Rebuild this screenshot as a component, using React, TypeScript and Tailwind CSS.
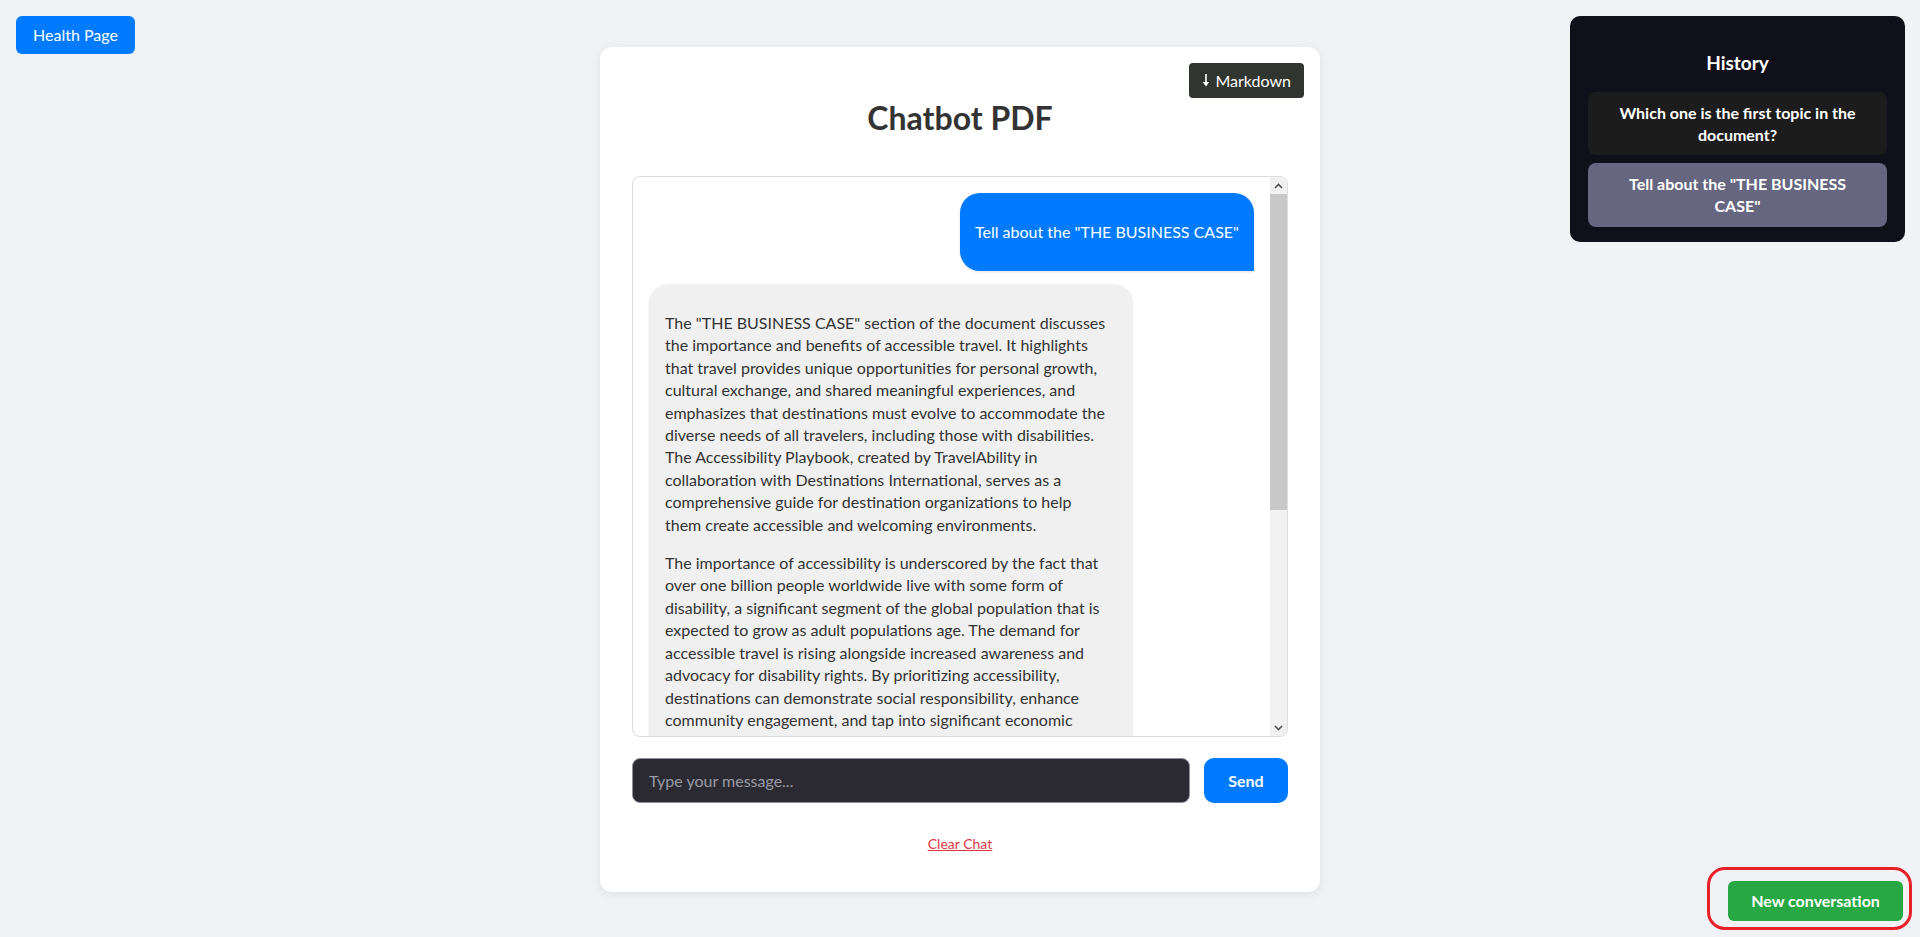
import React from 'react';

const firstParagraph = [
  'The "THE BUSINESS CASE" section of the document discusses',
  'the importance and benefits of accessible travel. It highlights',
  'that travel provides unique opportunities for personal growth,',
  'cultural exchange, and shared meaningful experiences, and',
  'emphasizes that destinations must evolve to accommodate the',
  'diverse needs of all travelers, including those with disabilities.',
  'The Accessibility Playbook, created by TravelAbility in',
  'collaboration with Destinations International, serves as a',
  'comprehensive guide for destination organizations to help',
  'them create accessible and welcoming environments.',
];

const secondParagraph = [
  'The importance of accessibility is underscored by the fact that',
  'over one billion people worldwide live with some form of',
  'disability, a significant segment of the global population that is',
  'expected to grow as adult populations age. The demand for',
  'accessible travel is rising alongside increased awareness and',
  'advocacy for disability rights. By prioritizing accessibility,',
  'destinations can demonstrate social responsibility, enhance',
  'community engagement, and tap into significant economic',
];

function Lines({ lines }: { lines: string[] }) {
  return (
    <p className="my-4 whitespace-nowrap leading-[22.4px]">
      {lines.map((line, i) => (
        <React.Fragment key={i}>
          {line}
          {i < lines.length - 1 && <br />}
        </React.Fragment>
      ))}
    </p>
  );
}

export default function App() {
  return (
    <div className="min-h-screen bg-[#f0f2f5] pt-[47px] font-[family-name:Lato,sans-serif] text-[16px] text-[#333]">
      {/* Top left link */}
      <button className="fixed top-4 left-4 flex h-[38px] w-[119px] items-center justify-center rounded-[6px] bg-[#007bff] text-[16px] text-white">
        Health Page
      </button>

      {/* History panel */}
      <aside className="fixed top-4 right-[15px] w-[335px] rounded-[10px] bg-[#10101a] px-[18px] pt-[36px] pb-[15px] text-white">
        <h3 className="mb-[18px] text-center text-[19px] leading-[22px] font-bold">History</h3>
        <div className="flex flex-col gap-2">
          <div className="rounded-lg bg-[#1c1c1c] px-3 py-[10px] text-center text-[16px] leading-[21.7px] font-bold">
            Which one is the first topic in the
            <br />
            document?
          </div>
          <div className="rounded-lg bg-[#666680] px-3 py-[10px] text-center text-[16px] leading-[21.7px] font-bold">
            Tell about the "THE BUSINESS
            <br />
            CASE"
          </div>
        </div>
      </aside>

      {/* Chat card */}
      <div className="relative mx-auto w-[720px] rounded-xl bg-white px-8 pt-[52px] pb-[37px] shadow-[0_2px_10px_rgba(0,0,0,0.08)]">
        <button className="absolute top-4 right-4 flex h-[35px] items-center gap-[5px] rounded-[4px] bg-[#31352f] px-[13px] text-[16px] text-white">
          <svg width="8" height="13" viewBox="0 0 8 13">
            <rect x="3.2" y="0" width="1.6" height="9" fill="white" />
            <path d="M0.8 8 L7.2 8 L4 12.5 Z" fill="white" />
          </svg>
          Markdown
        </button>

        <h1 className="text-center text-[32px] leading-[38px] font-bold text-[#333]">Chatbot PDF</h1>

        <div className="mt-[39px] flex h-[561px] overflow-hidden rounded-lg border border-[#ddd]">
          <div className="flex-1 overflow-hidden p-4">
            <div className="mb-[13px] flex justify-end">
              <div className="rounded-[20px] rounded-br-none bg-[#007bff] px-[15px] py-3 text-white shadow-[0_1px_3px_rgba(0,0,0,0.12)]">
                <p className="my-4 leading-[22px]">Tell about the "THE BUSINESS CASE"</p>
              </div>
            </div>
            <div className="w-[80%] rounded-[20px] rounded-bl-none bg-[#f0f0f0] px-4 py-3 text-[#333] shadow-[0_1px_3px_rgba(0,0,0,0.08)]">
              <Lines lines={firstParagraph} />
              <Lines lines={secondParagraph} />
            </div>
          </div>

          {/* scrollbar */}
          <div className="flex w-[17px] flex-col bg-[#f1f1f1]">
            <div className="flex h-[17px] items-center justify-center">
              <svg width="9" height="6" viewBox="0 0 9 6">
                <path d="M1 5 L4.5 1.5 L8 5" fill="none" stroke="#505050" strokeWidth="1.6" />
              </svg>
            </div>
            <div className="h-[316px] bg-[#c8c8c8]" />
            <div className="flex-1" />
            <div className="flex h-[17px] items-center justify-center">
              <svg width="9" height="6" viewBox="0 0 9 6">
                <path d="M1 1 L4.5 4.5 L8 1" fill="none" stroke="#505050" strokeWidth="1.6" />
              </svg>
            </div>
          </div>
        </div>

        <div className="mt-[21px] flex gap-[14px]">
          <input
            placeholder="Type your message..."
            className="h-[45px] flex-1 rounded-lg border border-[#8f8f9d] bg-[#2b2a33] px-4 text-[16px] text-white outline-none placeholder:text-[#9a9aa4]"
          />
          <button className="h-[45px] w-[84px] rounded-[10px] bg-[#007bff] text-[16px] font-bold text-white">Send</button>
        </div>

        <div className="mt-[28px] text-center">
          <button className="text-[14px] leading-5 text-[#dc3545] underline">Clear Chat</button>
        </div>
      </div>

      {/* New conversation */}
      <button className="fixed right-[17px] bottom-4 flex h-10 w-[175px] items-center justify-center rounded-[6px] bg-[#28a745] text-[16px] font-bold text-white">
        New conversation
      </button>
      <div className="pointer-events-none fixed right-2 bottom-[7px] h-[63px] w-[205px] rounded-[18px] border-[3px] border-[#e8202a]" />
    </div>
  );
}
